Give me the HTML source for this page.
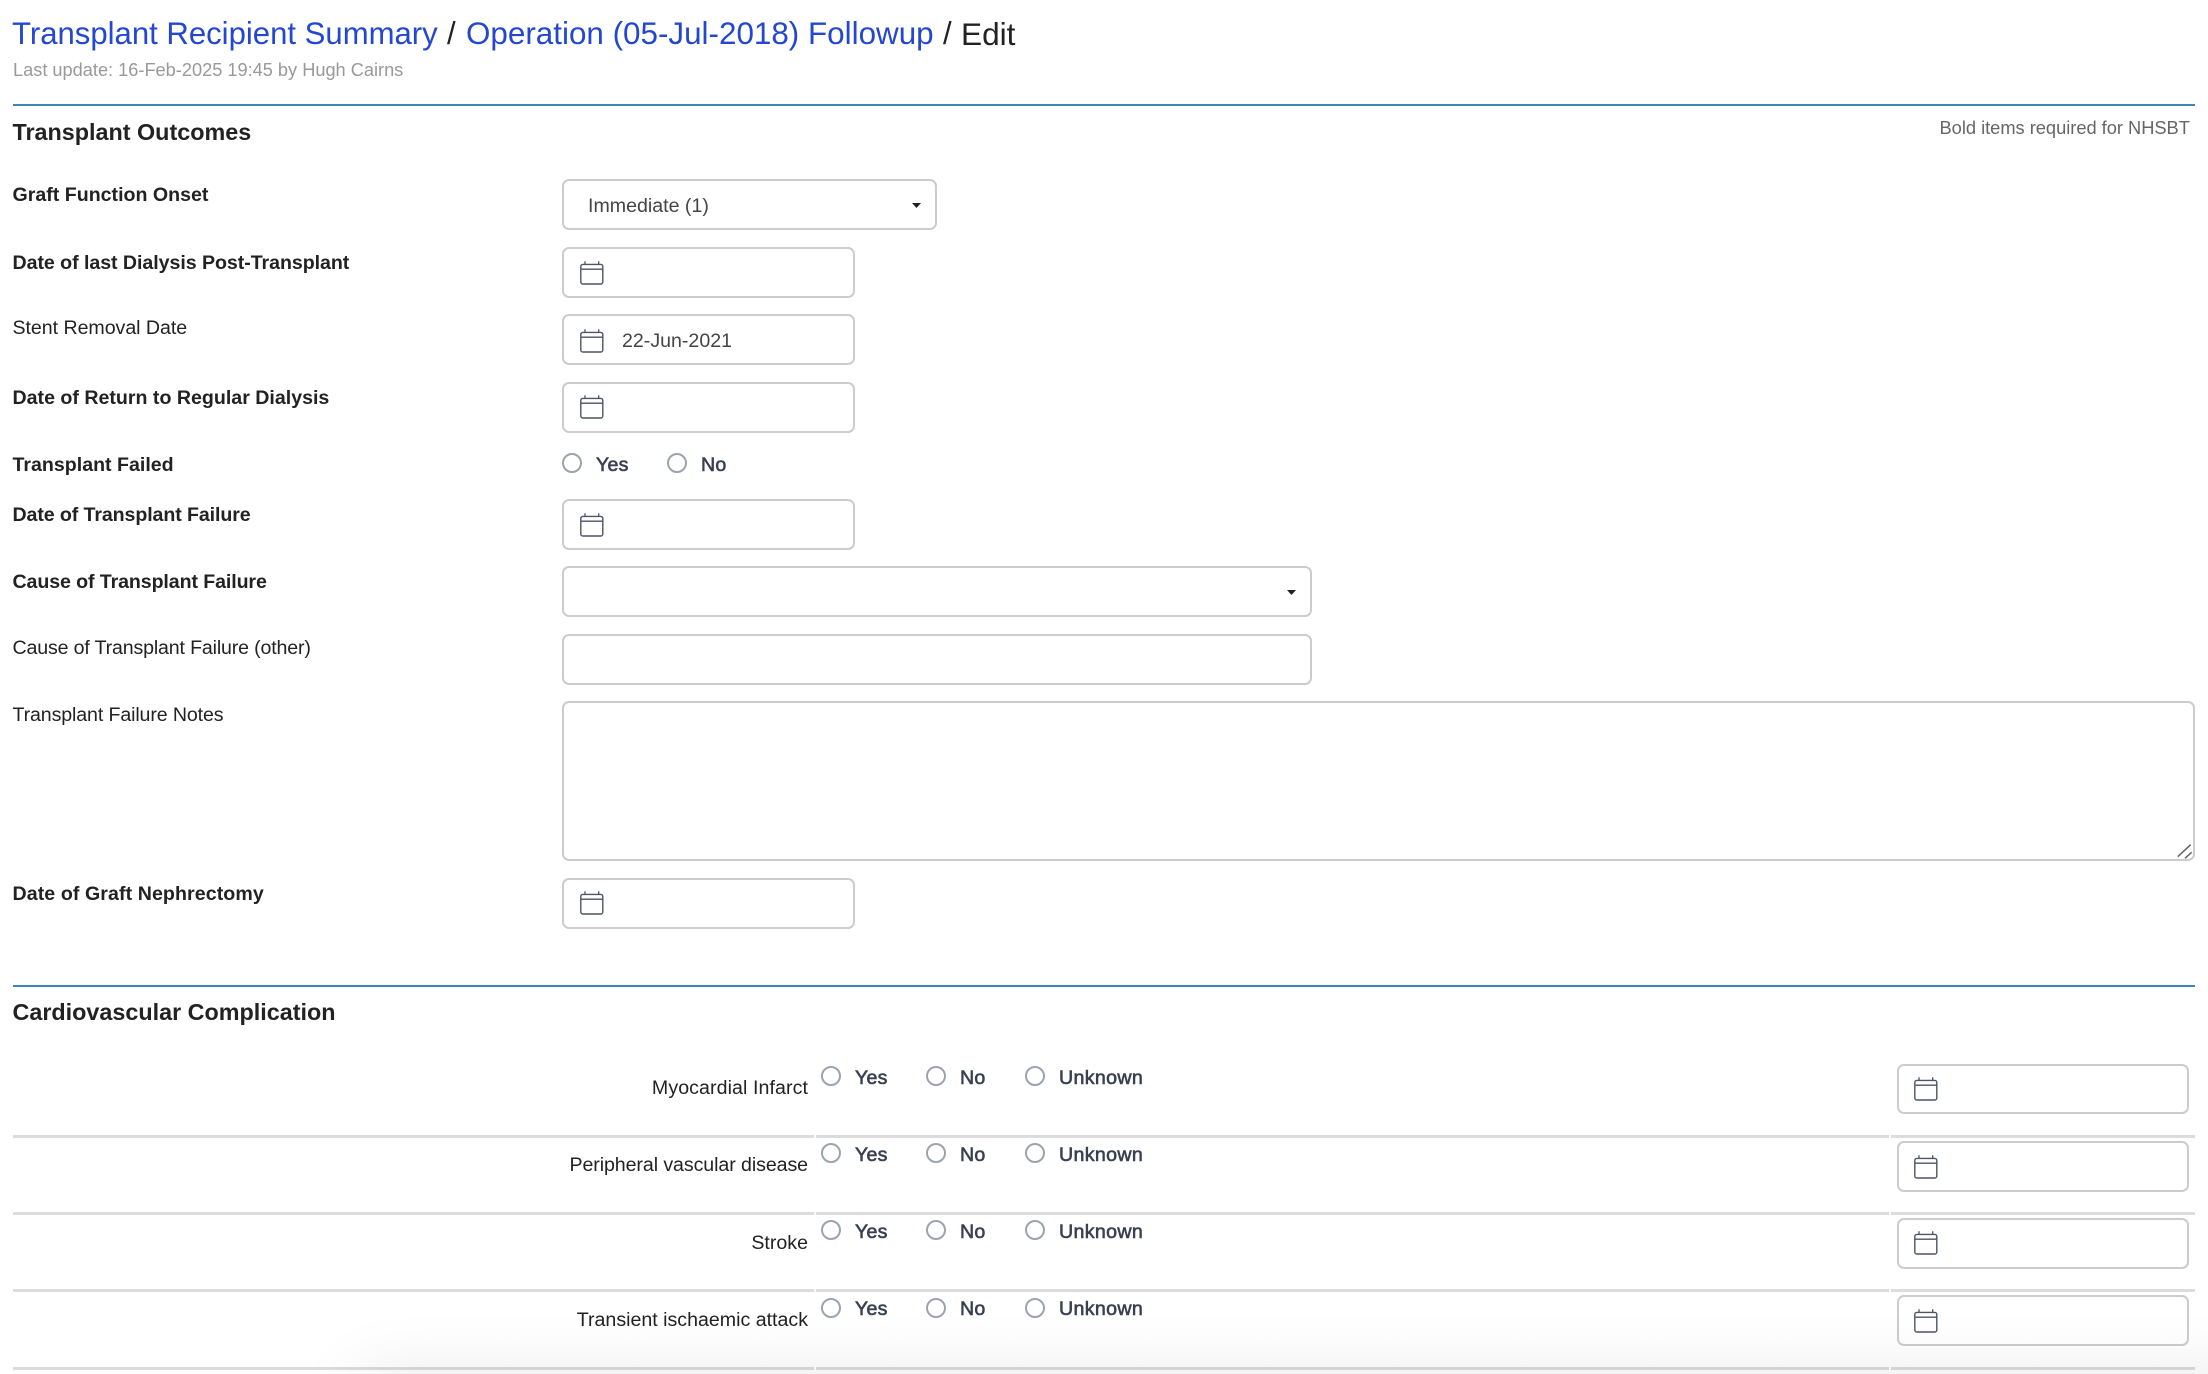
<!DOCTYPE html>
<html><head><meta charset="utf-8"><title>Edit</title>
<style>
html,body{margin:0;padding:0;background:#fff;width:2208px;height:1374px;overflow:hidden}
body{position:relative;font-family:"Liberation Sans",Arial,sans-serif;color:#222}
.t{position:absolute;white-space:nowrap;line-height:30px;font-size:19.6px}
.b{font-weight:bold}
.box{position:absolute;box-sizing:border-box;border:2px solid #ccc;border-radius:7px;background:#fff}
.hr{position:absolute;height:2px;left:13px;width:2182px;background:#3b87b8}
.ln{position:absolute;height:3px;background:#dcdcdc}
.r{position:absolute;box-sizing:border-box;width:20px;height:20px;border:2px solid #9ca3af;border-radius:50%;background:#fff}
.o{color:#374151;-webkit-text-stroke:.6px #374151;letter-spacing:.2px}
.u{letter-spacing:.35px}
.l{text-align:right;width:796px;left:12px;color:#222}
svg.c{position:absolute;width:24px;height:24px}
svg.a{position:absolute;width:9px;height:5px}
#clip{position:absolute;left:0;top:1280px;width:2208px;height:94px;overflow:hidden}
#sh{position:absolute;left:413px;top:93px;width:1795px;height:1px;box-shadow:0 60px 70px 55px rgba(0,0,0,.10);background:#f4f4f4}
</style></head><body>
<svg width="0" height="0" style="position:absolute"><symbol id="cal" viewBox="0 0 24 24"><path d="M5 .3V4M18.7.3V4" fill="none" stroke="#4b5563" stroke-width="1.3"/><rect x=".8" y="3.4" width="22" height="19.6" rx="2" fill="none" stroke="#4b5563" stroke-width="1.4"/><path d="M.8 8.2H22.8" fill="none" stroke="#4b5563" stroke-width="1.4"/></symbol></svg>

<div class="t" style="left:12px;top:16px;font-size:31.1px;line-height:36px;color:#2347d0">Transplant Recipient Summary</div>
<div class="t" style="left:447px;top:16px;font-size:31.1px;line-height:36px;color:#222">/</div>
<div class="t" style="left:466px;top:16px;font-size:31.4px;line-height:36px;color:#2347d0">Operation (05-Jul-2018) Followup</div>
<div class="t" style="left:943px;top:16px;font-size:31.1px;line-height:36px;color:#222">/</div>
<div class="t" style="left:961px;top:16px;font-size:31.6px;line-height:36px;color:#222">Edit</div>
<div class="t" style="left:13px;top:55px;font-size:18.2px;color:#999">Last update: 16-Feb-2025 19:45 by Hugh Cairns</div>
<div class="hr" style="top:104px"></div>
<div class="t b" style="left:12.5px;top:117px;font-size:23.35px;color:#222">Transplant Outcomes</div>
<div class="t" style="left:1939.5px;top:113px;font-size:18.3px;letter-spacing:-.02px;color:#666">Bold items required for NHSBT</div>

<div class="t b" style="left:12.5px;top:180px">Graft Function Onset</div>
<div class="t b" style="left:12.5px;top:248px;letter-spacing:-.05px">Date of last Dialysis Post-Transplant</div>
<div class="t" style="left:12.5px;top:313px;letter-spacing:-.04px">Stent Removal Date</div>
<div class="t b" style="left:12.5px;top:383px">Date of Return to Regular Dialysis</div>
<div class="t b" style="left:12.5px;top:450px">Transplant Failed</div>
<div class="t b" style="left:12.5px;top:500px;letter-spacing:-.1px">Date of Transplant Failure</div>
<div class="t b" style="left:12.5px;top:567px;letter-spacing:-.1px">Cause of Transplant Failure</div>
<div class="t" style="left:12.5px;top:633px;letter-spacing:-.16px">Cause of Transplant Failure (other)</div>
<div class="t" style="left:12.5px;top:700px;letter-spacing:-.12px">Transplant Failure Notes</div>
<div class="t b" style="left:12.5px;top:879px;letter-spacing:.08px">Date of Graft Nephrectomy</div>

<div class="box" style="left:562px;top:179px;width:375px;height:51px"></div>
<div class="t" style="left:588px;top:191px;color:#444">Immediate (1)</div>
<svg class="a" style="left:912px;top:203px" viewBox="0 0 9 5"><path d="M0 0H9L4.5 5Z" fill="#222"/></svg>

<div class="box" style="left:562px;top:247px;width:293px;height:51px"></div>
<svg class="c" style="left:580px;top:261px"><use href="#cal"/></svg>
<div class="box" style="left:562px;top:314px;width:293px;height:51px"></div>
<svg class="c" style="left:580px;top:329px"><use href="#cal"/></svg>
<div class="t" style="left:622px;top:326px;color:#444">22-Jun-2021</div>
<div class="box" style="left:562px;top:382px;width:293px;height:51px"></div>
<svg class="c" style="left:580px;top:395px"><use href="#cal"/></svg>

<div class="r" style="left:562px;top:453px"></div><div class="t o" style="left:596px;top:450px">Yes</div>
<div class="r" style="left:667px;top:453px"></div><div class="t o" style="left:701px;top:450px">No</div>

<div class="box" style="left:562px;top:499px;width:293px;height:51px"></div>
<svg class="c" style="left:580px;top:513px"><use href="#cal"/></svg>
<div class="box" style="left:562px;top:566px;width:750px;height:51px"></div>
<svg class="a" style="left:1287px;top:590px" viewBox="0 0 9 5"><path d="M0 0H9L4.5 5Z" fill="#222"/></svg>
<div class="box" style="left:562px;top:634px;width:750px;height:51px"></div>
<div class="box" style="left:562px;top:701px;width:1633px;height:160px"></div>
<svg style="position:absolute;left:2176px;top:843px;width:17px;height:17px" viewBox="0 0 17 17"><path d="M1.7 13.7L14.7 1.7M9 15.3L15.7 9.3" stroke="#666" stroke-width="1.6" fill="none"/></svg>
<div class="box" style="left:562px;top:878px;width:293px;height:51px"></div>
<svg class="c" style="left:580px;top:891px"><use href="#cal"/></svg>

<div class="hr" style="top:985px"></div>
<div class="t b" style="left:12.5px;top:997px;font-size:23.35px;color:#222">Cardiovascular Complication</div>

<div class="t l" style="top:1073px;letter-spacing:.08px">Myocardial Infarct</div>
<div class="r" style="left:821px;top:1066px"></div><div class="t o" style="left:855px;top:1063px">Yes</div>
<div class="r" style="left:926px;top:1066px"></div><div class="t o" style="left:960px;top:1063px">No</div>
<div class="r" style="left:1024.5px;top:1066px"></div><div class="t o u" style="left:1059px;top:1063px">Unknown</div>
<div class="box" style="left:1897px;top:1064px;width:292px;height:50px"></div>
<svg class="c" style="left:1914px;top:1077px"><use href="#cal"/></svg>
<div class="ln" style="left:13px;width:801px;top:1135px"></div><div class="ln" style="left:816px;width:1073px;top:1135px"></div><div class="ln" style="left:1891px;width:304px;top:1135px"></div>

<div class="t l" style="top:1150px;letter-spacing:-.08px">Peripheral vascular disease</div>
<div class="r" style="left:821px;top:1143px"></div><div class="t o" style="left:855px;top:1140px">Yes</div>
<div class="r" style="left:926px;top:1143px"></div><div class="t o" style="left:960px;top:1140px">No</div>
<div class="r" style="left:1024.5px;top:1143px"></div><div class="t o u" style="left:1059px;top:1140px">Unknown</div>
<div class="box" style="left:1897px;top:1141px;width:292px;height:51px"></div>
<svg class="c" style="left:1914px;top:1155px"><use href="#cal"/></svg>
<div class="ln" style="left:13px;width:801px;top:1212px"></div><div class="ln" style="left:816px;width:1073px;top:1212px"></div><div class="ln" style="left:1891px;width:304px;top:1212px"></div>

<div class="t l" style="top:1228px">Stroke</div>
<div class="r" style="left:821px;top:1220px"></div><div class="t o" style="left:855px;top:1217px">Yes</div>
<div class="r" style="left:926px;top:1220px"></div><div class="t o" style="left:960px;top:1217px">No</div>
<div class="r" style="left:1024.5px;top:1220px"></div><div class="t o u" style="left:1059px;top:1217px">Unknown</div>
<div class="box" style="left:1897px;top:1218px;width:292px;height:51px"></div>
<svg class="c" style="left:1914px;top:1231px"><use href="#cal"/></svg>
<div class="ln" style="left:13px;width:801px;top:1289px"></div><div class="ln" style="left:816px;width:1073px;top:1289px"></div><div class="ln" style="left:1891px;width:304px;top:1289px"></div>

<div class="t l" style="top:1305px">Transient ischaemic attack</div>
<div class="r" style="left:821px;top:1298px"></div><div class="t o" style="left:855px;top:1294px">Yes</div>
<div class="r" style="left:926px;top:1298px"></div><div class="t o" style="left:960px;top:1294px">No</div>
<div class="r" style="left:1024.5px;top:1298px"></div><div class="t o u" style="left:1059px;top:1294px">Unknown</div>
<div class="box" style="left:1897px;top:1295px;width:292px;height:51px"></div>
<svg class="c" style="left:1914px;top:1309px"><use href="#cal"/></svg>
<div class="ln" style="left:13px;width:801px;top:1367px"></div><div class="ln" style="left:816px;width:1073px;top:1367px"></div><div class="ln" style="left:1891px;width:304px;top:1367px"></div>

<div id="clip"><div id="sh"></div></div>
</body></html>
